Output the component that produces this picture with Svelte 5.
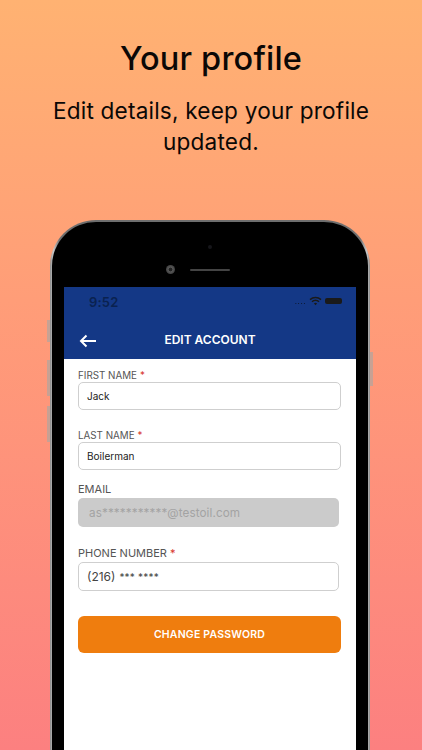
<script>
  const fields = [
    { label: "FIRST NAME", value: "Jack", required: true, kind: "first" },
    { label: "LAST NAME", value: "Boilerman", required: true, kind: "last" },
    { label: "EMAIL", value: "as***********@testoil.com", required: false, kind: "email" },
    { label: "PHONE NUMBER", value: "(216)", masked: "*** ****", required: true, kind: "phone" },
  ];
</script>

<main class="page">
  <header class="intro">
    <h1>Your profile</h1>
    <p>Edit details, keep your profile updated.</p>
  </header>

  <div class="device">
    <span class="side-btn mute"></span>
    <span class="side-btn vol-up"></span>
    <span class="side-btn vol-down"></span>
    <span class="side-btn power"></span>

    <div class="bezel">
      <div class="earpiece">
        <span class="sensor"></span>
        <div class="cam-row">
          <span class="camera"></span>
          <span class="speaker"></span>
        </div>
      </div>

      <div class="screen">
        <div class="appbar">
          <div class="statusbar">
            <span class="time">9:52</span>
            <div class="status-icons">
              <span class="dots">....</span>
              <svg width="13" height="10" viewBox="0 0 13 10" aria-hidden="true">
                <path d="M1 3.6a8 8 0 0 1 11 0M3 5.8a5 5 0 0 1 7 0" fill="none" stroke="#fff" stroke-width="1.5" />
                <path d="M4.9 7.4a2.4 2.4 0 0 1 3.2 0L6.5 9.2z" fill="#fff" />
              </svg>
              <span class="battery"></span>
            </div>
          </div>
          <div class="titlebar">
            <svg class="back" width="18" height="14" viewBox="0 0 18 14" aria-hidden="true">
              <path d="M17 7H2.5M7.5 1.5 2 7l5.5 5.5" fill="none" stroke="#fff" stroke-width="2" />
            </svg>
            <span>EDIT ACCOUNT</span>
          </div>
        </div>

        <form class="form" on:submit|preventDefault>
          {#each fields as field}
            <div class="field {field.kind}">
              <div class="label">
                {field.label}{#if field.required}<span class="req">*</span>{/if}
              </div>
              <div class="input">
                {field.value}{#if field.masked}<span class="masked">{field.masked}</span>{/if}
              </div>
            </div>
          {/each}
          <button type="button" class="change">CHANGE PASSWORD</button>
        </form>
      </div>
    </div>
  </div>
</main>

<style>
  :global(body) {
    margin: 0;
    overflow: hidden;
  }

  .page {
    width: 422px;
    height: 750px;
    overflow: hidden;
    box-sizing: border-box;
    padding-top: 38px;
    background: linear-gradient(180deg, #ffb272 0%, #ff9d78 40%, #fc8080 100%);
    font-family: "Inter", "Liberation Sans", sans-serif;
  }

  .intro {
    text-align: center;
    color: #0b0806;
  }

  h1 {
    margin: 0;
    font-size: 32.5px;
    line-height: 42px;
    font-weight: 500;
    letter-spacing: 0.2px;
  }

  .intro p {
    width: 340px;
    margin: 15px auto 0;
    font-size: 22.6px;
    line-height: 31px;
    letter-spacing: 0.2px;
  }

  .device {
    position: relative;
    width: 320px;
    height: 560px;
    margin: 63px 0 0 50px;
    box-sizing: border-box;
    padding: 2px;
    border-radius: 46px 46px 0 0;
    background: linear-gradient(90deg, #8b8b8b, #c9c9c9 1%, #6e6e6e 3%, #6e6e6e 97%, #c9c9c9 99%, #8b8b8b);
  }

  .side-btn {
    position: absolute;
    width: 3px;
    background: rgba(175, 165, 160, 0.7);
  }

  .mute { left: -3px; top: 100px; height: 22px; }
  .vol-up { left: -3px; top: 140px; height: 36px; }
  .vol-down { left: -3px; top: 186px; height: 36px; }
  .power { right: -3px; top: 132px; height: 34px; }

  .bezel {
    height: 100%;
    box-sizing: border-box;
    padding: 0 12px;
    border-radius: 44px 44px 0 0;
    background: #000;
  }

  .earpiece {
    height: 65px;
    display: flex;
    flex-direction: column;
    align-items: center;
  }

  .sensor {
    width: 4px;
    height: 4px;
    margin-top: 23px;
    border-radius: 50%;
    background: #16161a;
  }

  .cam-row {
    display: flex;
    align-items: center;
    gap: 15px;
    margin: 16px 0 0 -25px;
  }

  .camera {
    width: 9px;
    height: 9px;
    border-radius: 50%;
    background: radial-gradient(circle, #222 25%, #555 35%, #333 100%);
  }

  .speaker {
    width: 40px;
    height: 2px;
    border-radius: 1px;
    background: #444;
  }

  .screen {
    height: 480px;
    background: #fff;
    overflow: hidden;
  }

  .appbar {
    height: 72px;
    background: #143886;
    color: #fff;
  }

  .statusbar {
    height: 33px;
    box-sizing: border-box;
    display: flex;
    justify-content: space-between;
    align-items: flex-start;
    padding: 7px 14px 0 25px;
  }

  .time {
    color: #0a2250;
    font-size: 13px;
    line-height: 17px;
    font-weight: 600;
    letter-spacing: 0.2px;
  }

  .status-icons {
    display: flex;
    align-items: center;
    gap: 3px;
    height: 14px;
    filter: brightness(0.1);
  }

  .dots {
    color: #5a6a90;
    font-size: 8px;
    letter-spacing: 0.5px;
  }

  .battery {
    width: 17px;
    height: 6px;
    border-radius: 2px;
    background: #fff;
  }

  .titlebar {
    position: relative;
    height: 39px;
    display: flex;
    align-items: center;
    justify-content: center;
    font-size: 12px;
    font-weight: 600;
  }

  .back {
    position: absolute;
    left: 15px;
    top: 14px;
  }

  .form {
    padding: 10px 15px 0 14px;
    display: flex;
    flex-direction: column;
  }

  .field {
    margin-bottom: 19px;
  }

  .label {
    color: #555;
    font-size: 9.8px;
    line-height: 13px;
  }

  .req {
    margin-left: 3px;
    color: #d8342c;
  }

  .input {
    box-sizing: border-box;
    height: 28px;
    padding: 0 8px;
    display: flex;
    align-items: center;
    border: 1px solid #cfcfcf;
    border-radius: 5px;
    background: #fff;
    color: #222;
    font-size: 10px;
  }

  .last {
    margin-bottom: 12px;
  }

  .email {
    margin-bottom: 20px;
  }

  .email .label {
    font-size: 11px;
    line-height: 15px;
    margin-bottom: 1px;
  }

  .email .input {
    width: 261px;
    height: 29px;
    padding: 0 11px;
    border: 0;
    background: #cbcbcb;
    color: #a3a3a3;
    font-size: 11.7px;
    letter-spacing: 0.1px;
  }

  .phone {
    margin-bottom: 25px;
  }

  .phone .label {
    font-size: 11px;
    line-height: 13px;
    margin-bottom: 2px;
  }

  .phone .input {
    width: 261px;
    height: 29px;
    color: #444;
    font-size: 12px;
  }

  .masked {
    margin-left: 4px;
    font-size: 10px;
    letter-spacing: 0.2px;
  }

  .change {
    height: 37px;
    border: 0;
    border-radius: 6px;
    background: #ef7d0e;
    color: #fff;
    font: 600 10.5px "Inter", sans-serif;
    letter-spacing: 0.2px;
  }
</style>
